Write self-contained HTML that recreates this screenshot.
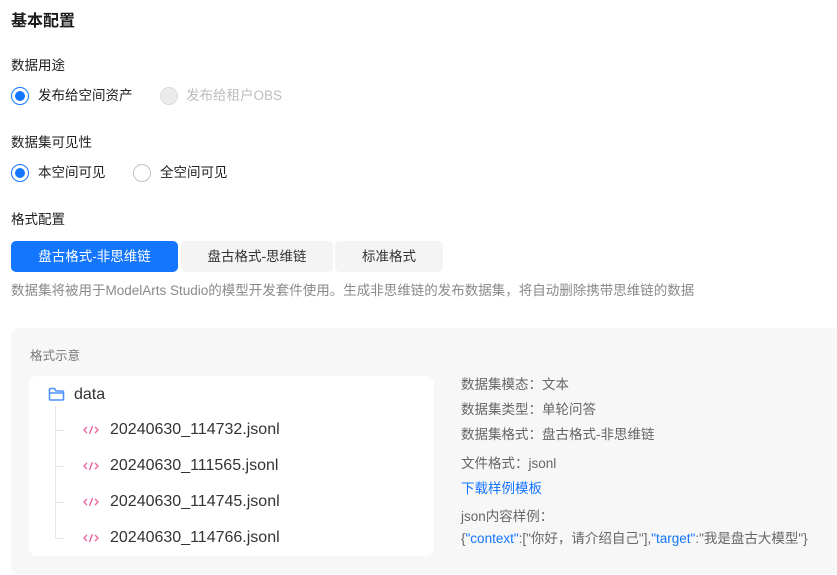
<!DOCTYPE html>
<html><head><meta charset="utf-8"><style>
*{margin:0;padding:0;box-sizing:border-box}
body{width:837px;height:575px;background:#fff;font-family:"Liberation Sans","Noto Sans CJK SC",sans-serif;position:relative;overflow:hidden;color:#1f1f1f}
.a{position:absolute;white-space:nowrap;line-height:1}
.r{position:absolute;width:18px;height:18px;border-radius:50%;border:1px solid #c2c2c2;background:#fff}
.r.on{border-color:#1476ff}
.r.on::after{content:"";position:absolute;left:3px;top:3px;width:10px;height:10px;border-radius:50%;background:#1476ff}
.r.dis{background:#ebebeb;border-color:#dcdcdc}
.btn{position:absolute;top:241px;height:31px;border-radius:5px;background:#f4f4f4;color:#333;font-size:13.5px;line-height:31px;text-align:center}
.fn{position:absolute;left:110px;font-size:16px;color:#333;line-height:1}
.ic{position:absolute;left:82px;width:18px;height:12px}
.tk{position:absolute;left:55px;width:9px;height:1px;background:#e6e6e6}
.rt{position:absolute;left:461px;font-size:13.5px;color:#666;line-height:1;white-space:nowrap}
</style></head><body>
<div class="a" style="left:11px;top:14px;font-size:16px;font-weight:bold;color:#1a1a1a">基本配置</div>
<div class="a" style="left:11px;top:59px;font-size:13.5px">数据用途</div>
<div class="r on" style="left:11px;top:87px"></div>
<div class="a" style="left:38px;top:89px;font-size:13.5px">发布给空间资产</div>
<div class="r dis" style="left:160px;top:87px"></div>
<div class="a" style="left:186px;top:89px;font-size:13.5px;color:#bdbdbd">发布给租户OBS</div>
<div class="a" style="left:11px;top:136px;font-size:13.5px">数据集可见性</div>
<div class="r on" style="left:11px;top:164px"></div>
<div class="a" style="left:38px;top:166px;font-size:13.5px">本空间可见</div>
<div class="r" style="left:133px;top:164px"></div>
<div class="a" style="left:160px;top:166px;font-size:13.5px">全空间可见</div>
<div class="a" style="left:11px;top:213px;font-size:13.5px">格式配置</div>
<div class="btn" style="left:11px;width:167px;background:#1476ff;color:#fff">盘古格式-非思维链</div>
<div class="btn" style="left:181px;width:152px">盘古格式-思维链</div>
<div class="btn" style="left:335px;width:108px">标准格式</div>
<div class="a" style="left:11px;top:284px;font-size:13.5px;color:#8a8a8a">数据集将被用于ModelArts Studio的模型开发套件使用。生成非思维链的发布数据集，将自动删除携带思维链的数据</div>
<div style="position:absolute;left:11px;top:328px;width:840px;height:246px;background:#f7f7f7;border-radius:8px"></div>
<div class="a" style="left:30px;top:350px;font-size:12.5px;color:#777">格式示意</div>
<div style="position:absolute;left:29px;top:376px;width:405px;height:180px;background:#fff;border-radius:8px"></div>
<svg style="position:absolute;left:48px;top:387px" width="17" height="14" viewBox="0 0 17 14"><path d="M1.5 3V12a1 1 0 0 0 1 1H14.5a1 1 0 0 0 1-1V5a1 1 0 0 0-1-1H8L6.5 1.5H2.5a1 1 0 0 0-1 1z M1.5 6H15.5" fill="none" stroke="#4d8fff" stroke-width="1.6" stroke-linejoin="round"/></svg>
<div class="a" style="left:74px;top:387px;font-size:16px;color:#333">data</div>
<div style="position:absolute;left:55px;top:406px;width:1px;height:132px;background:#e6e6e6"></div>
<div class="tk" style="top:430px"></div><div class="tk" style="top:466px"></div><div class="tk" style="top:502px"></div><div class="tk" style="top:538px"></div>
<svg class="ic" style="top:424px" viewBox="0 0 18 12"><path d="M5 3L2 6L5 9M13 3L16 6L13 9M10.5 2L7.5 10" fill="none" stroke="#f0609e" stroke-width="1.3"/></svg>
<svg class="ic" style="top:460px" viewBox="0 0 18 12"><path d="M5 3L2 6L5 9M13 3L16 6L13 9M10.5 2L7.5 10" fill="none" stroke="#f0609e" stroke-width="1.3"/></svg>
<svg class="ic" style="top:496px" viewBox="0 0 18 12"><path d="M5 3L2 6L5 9M13 3L16 6L13 9M10.5 2L7.5 10" fill="none" stroke="#f0609e" stroke-width="1.3"/></svg>
<svg class="ic" style="top:532px" viewBox="0 0 18 12"><path d="M5 3L2 6L5 9M13 3L16 6L13 9M10.5 2L7.5 10" fill="none" stroke="#f0609e" stroke-width="1.3"/></svg>
<div class="fn" style="top:422px">20240630_114732.jsonl</div>
<div class="fn" style="top:458px">20240630_111565.jsonl</div>
<div class="fn" style="top:494px">20240630_114745.jsonl</div>
<div class="fn" style="top:530px">20240630_114766.jsonl</div>
<div class="rt" style="top:378px">数据集模态：文本</div>
<div class="rt" style="top:403px">数据集类型：单轮问答</div>
<div class="rt" style="top:428px">数据集格式：盘古格式-非思维链</div>
<div class="rt" style="top:457px">文件格式：jsonl</div>
<div class="rt" style="top:482px;color:#1476ff">下载样例模板</div>
<div class="rt" style="top:510px">json内容样例：</div>
<div class="rt" style="top:532px">{<span style="color:#1476ff">"context"</span>:["你好，请介绍自己"],<span style="color:#1476ff">"target"</span>:"我是盘古大模型"}</div>
</body></html>
